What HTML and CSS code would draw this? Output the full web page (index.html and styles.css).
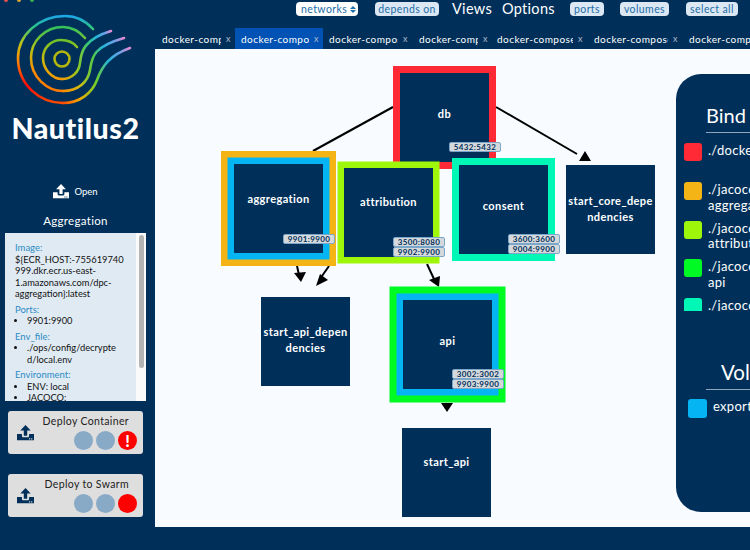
FILE: index.html
```html
<!DOCTYPE html>
<html lang="en">
<head>
<meta charset="utf-8">
<title>Nautilus2</title>
<link rel="stylesheet" href="styles.css">
</head>
<body>
<div class="app">
  <aside class="sidebar">
    <div class="dots"><i class="dot dot-r"></i><i class="dot dot-y"></i><i class="dot dot-g"></i></div>
    <svg class="logo" viewBox="0 2 155 108" width="155" height="108" fill="none" stroke-width="2.600" stroke-linecap="round">
      <defs>
        <linearGradient id="leftOuter" gradientUnits="userSpaceOnUse" x1="0" y1="16" x2="0" y2="103">
          <stop offset="0" stop-color="#1ea7e8"/>
          <stop offset=".12" stop-color="#27c28a"/>
          <stop offset=".3" stop-color="#b6c81a"/>
          <stop offset=".5" stop-color="#ff8a00"/>
          <stop offset=".8" stop-color="#ff0a0a"/>
          <stop offset="1" stop-color="#ff4a00"/>
        </linearGradient>
        <linearGradient id="leftMiddle" gradientUnits="userSpaceOnUse" x1="0" y1="27" x2="0" y2="91">
          <stop offset="0" stop-color="#32c25a"/>
          <stop offset=".35" stop-color="#b5c213"/>
          <stop offset=".7" stop-color="#ff8a00"/>
          <stop offset="1" stop-color="#ff7a00"/>
        </linearGradient>
        <linearGradient id="leftInner" gradientUnits="userSpaceOnUse" x1="0" y1="40" x2="0" y2="79">
          <stop offset="0" stop-color="#6fc22a"/>
          <stop offset=".5" stop-color="#c9b80e"/>
          <stop offset="1" stop-color="#f59a06"/>
        </linearGradient>
        <linearGradient id="rightOuter" gradientUnits="userSpaceOnUse" x1="63" y1="0" x2="130" y2="0">
          <stop offset="0" stop-color="#ff4a00"/>
          <stop offset=".25" stop-color="#f5a800"/>
          <stop offset=".5" stop-color="#6fcf2a"/>
          <stop offset=".68" stop-color="#22b6dc"/>
          <stop offset=".85" stop-color="#6f9fe6"/>
          <stop offset="1" stop-color="#e58ad2"/>
        </linearGradient>
        <linearGradient id="rightMiddle" gradientUnits="userSpaceOnUse" x1="63" y1="0" x2="124" y2="0">
          <stop offset="0" stop-color="#ff8a00"/>
          <stop offset=".3" stop-color="#c9c014"/>
          <stop offset=".5" stop-color="#4fcb4a"/>
          <stop offset=".65" stop-color="#22b6dc"/>
          <stop offset=".85" stop-color="#6f9fe6"/>
          <stop offset="1" stop-color="#e58ad2"/>
        </linearGradient>
        <linearGradient id="rightInner" gradientUnits="userSpaceOnUse" x1="62" y1="0" x2="111" y2="0">
          <stop offset="0" stop-color="#f59a06"/>
          <stop offset=".3" stop-color="#9cc71a"/>
          <stop offset=".5" stop-color="#3fc86a"/>
          <stop offset=".7" stop-color="#22b6dc"/>
          <stop offset=".88" stop-color="#6f9fe6"/>
          <stop offset="1" stop-color="#e58ad2"/>
        </linearGradient>
      </defs>
      <path stroke="url(#leftOuter)" d="M93 29C85 20 76 16 65 16C39 16 18 35 18 58C18 85 40 103 63 103"/>
      <path stroke="url(#rightOuter)" d="M63 103C80 103 92 93 97 80C102 66 110 55 130 48"/>
      <path stroke="url(#leftMiddle)" d="M85 38C79 31 71 27 63 27C45 27 31 41 31 58C31 77 47 91 63 91"/>
      <path stroke="url(#rightMiddle)" d="M63 91C78 91 88 82 90 70C92 58 92 47 124 38"/>
      <path stroke="url(#leftInner)" d="M77 47C73 42 67 40 61 40C51 40 43 48 43 58C43 69 52 79 62 79"/>
      <path stroke="url(#rightInner)" d="M62 79C72 79 79 72 80 63C81 52 84 39 111 31"/>
      <circle stroke="#b4b80e" cx="62" cy="59" r="7.500"/>
    </svg>
    <h1 class="brand">Nautilus2</h1>
    <div class="open-row">
      <svg class="upload upload-white" viewBox="0 0 18 17" width="16" height="16"><use href="#upload-shape"/></svg>
      <span>Open</span>
    </div>
    <h2 class="service-name">Aggregation</h2>
    <div class="info-box">
      <div class="info-scroll">
        <h3>Image:</h3>
        <p>${ECR_HOST:-755619740<br>999.dkr.ecr.us-east-<br>1.amazonaws.com/dpc-<br>aggregation}:latest</p>
        <h3>Ports:</h3>
        <ul><li>9901:9900</li></ul>
        <h3>Env_file:</h3>
        <ul><li>./ops/config/decrypte<br>d/local.env</li></ul>
        <h3>Environment:</h3>
        <ul><li>ENV: local</li><li>JACOCO:</li></ul>
      </div>
      <div class="scrollbar"><div class="thumb"></div></div>
    </div>
    <button class="deploy" type="button">
      <svg class="upload upload-navy" viewBox="0 0 18 17" width="17" height="17"><use href="#upload-shape"/></svg>
      <span class="deploy-body">
        <span class="deploy-title">Deploy Container</span>
        <span class="lights"><i class="light"></i><i class="light"></i><i class="light light-red">!</i></span>
      </span>
    </button>
    <button class="deploy deploy-next" type="button">
      <svg class="upload upload-navy" viewBox="0 0 18 17" width="17" height="17"><use href="#upload-shape"/></svg>
      <span class="deploy-body">
        <span class="deploy-title">Deploy to Swarm</span>
        <span class="lights"><i class="light"></i><i class="light"></i><i class="light light-red"></i></span>
      </span>
    </button>
  </aside>
  <main class="main">
    <nav class="toolbar">
      <span class="pill pill-select">networks <b class="updown"><i class="up"></i><i class="down"></i></b></span>
      <span class="pill pill-depends">depends on</span>
      <span class="tb-title tb-views">Views</span>
      <span class="tb-title tb-options">Options</span>
      <span class="pill pill-ports">ports</span>
      <span class="pill pill-volumes">volumes</span>
      <span class="pill pill-all">select all</span>
    </nav>
    <div class="tabs">
      <div class="tab t1"><span class="tab-name">docker-compose.yml</span><span class="x">x</span></div>
      <div class="tab t2 active"><span class="tab-name">docker-compose.yml</span><span class="x">x</span></div>
      <div class="tab t3"><span class="tab-name">docker-compose.yml</span><span class="x">x</span></div>
      <div class="tab t4"><span class="tab-name">docker-compose.yml</span><span class="x">x</span></div>
      <div class="tab t5"><span class="tab-name">docker-compose.dev.yml</span><span class="x">x</span></div>
      <div class="tab t6"><span class="tab-name">docker-composeE.yml</span><span class="x">x</span></div>
      <div class="tab t7"><span class="tab-name">docker-comp</span></div>
    </div>
    <section class="canvas">
      <svg class="edges" viewBox="0 0 595 478" width="595" height="478">
        <g stroke="#000" stroke-width="2">
          <line x1="238" y1="58" x2="158" y2="102"/>
          <line x1="341" y1="58" x2="422" y2="105"/>
          <line x1="142" y1="217" x2="144" y2="226"/>
          <line x1="174" y1="217" x2="167" y2="227"/>
          <line x1="272" y1="215" x2="279" y2="230"/>
        </g>
        <g fill="#000">
          <polygon points="430,102 424,112 436,112"/>
          <polygon points="139,224 151,223 146,233"/>
          <polygon points="165,225 173,231 161,237"/>
          <polygon points="274,231 285,227 284,238"/>
          <polygon points="286,354 298,354 292,363"/>
        </g>
      </svg>

      <div class="node n-db"><span class="node-label">db</span><div class="ports"><span>5432:5432</span></div></div>
      <div class="node n-aggregation"><span class="node-label">aggregation</span><div class="ports"><span>9901:9900</span></div></div>
      <div class="node n-attribution"><span class="node-label">attribution</span><div class="ports"><span>3500:8080</span><span>9902:9900</span></div></div>
      <div class="node n-consent"><span class="node-label">consent</span><div class="ports"><span>3600:3600</span><span>9004:9900</span></div></div>
      <div class="node n-core"><span class="node-label">start_core_depe<br>ndencies</span></div>
      <div class="node n-apidep"><span class="node-label">start_api_depen<br>dencies</span></div>
      <div class="node n-api"><span class="node-label">api</span><div class="ports"><span>3002:3002</span><span>9903:9900</span></div></div>
      <div class="node n-startapi"><span class="node-label">start_api</span></div>

      <aside class="legend">
        <h2 class="legend-head">Bind Mounts</h2>
        <div class="legend-list">
          <div class="legend-row row-1"><i class="swatch c-red"></i><span>./docker/db/init.sql</span></div>
          <div class="legend-row row-2"><i class="swatch c-orange"></i><span>./jacoco-reports/<br>aggregation</span></div>
          <div class="legend-row row-2"><i class="swatch c-lime"></i><span>./jacoco-reports/<br>attribution</span></div>
          <div class="legend-row row-2"><i class="swatch c-green"></i><span>./jacoco-reports/<br>api</span></div>
          <div class="legend-row row-2"><i class="swatch c-teal"></i><span>./jacoco-reports/<br>consent</span></div>
        </div>
        <h2 class="legend-head vol-head">Volumes</h2>
        <div class="legend-row vol-row"><i class="swatch c-blue"></i><span>exports</span></div>
      </aside>
    </section>
  </main>
</div>
<svg class="defs" width="0" height="0" aria-hidden="true">
  <symbol id="upload-shape" viewBox="0 0 18 17">
    <path d="M7.200 12V6.500H3.500L9 .5l5.500 6h-3.700V12z" fill="currentColor"/>
    <path fill-rule="evenodd" d="M0 10h5.200v2.200c0 .8.500 1.300 1.300 1.300h5c.8 0 1.300-.5 1.300-1.300V10H18v7H0zM12.800 14.700v1.200H14v-1.200zM15 14.700v1.200h1.200v-1.200z" fill="currentColor"/>
  </symbol>
</svg>
</body>
</html>
```
FILE: styles.css
```css
* { box-sizing: border-box; }
html, body { margin: 0; height: 100%; }
body {
  width: 750px;
  height: 550px;
  overflow: hidden;
  background: #00305a;
  color: #fff;
  font-family: "Lato", "Noto Sans", sans-serif;
}
.app { display: flex; width: 750px; height: 550px; }
.defs { position: absolute; }

.sidebar {
  position: relative;
  width: 155px;
  flex: none;
  display: flex;
  flex-direction: column;
  align-items: center;
}
.dots { display: flex; gap: 9px; height: 2px; width: 100%; padding-left: 4px; overflow: hidden; }
.dot { width: 4px; height: 4px; flex: none; border-radius: 50%; margin-top: -2px; }
.dot-r { background: #f0504a; }
.dot-y { background: #e0a92a; }
.dot-g { background: #33b54a; }
.logo { flex: none; display: block; }
.brand {
  margin: 2px 4px 0 0;
  font-size: 28.500px;
  line-height: 32px;
  font-weight: 900;
  letter-spacing: .55px;
}
.open-row {
  display: flex;
  align-items: center;
  gap: 5px;
  margin: 37px 4px 0 0;
  height: 20px;
  font-size: 9.500px;
}
.upload { display: block; flex: none; }
.upload-white { color: #fff; }
.upload-navy { color: #00305a; }
.service-name {
  margin: 13px 4px 0 0;
  font-size: 11.500px;
  line-height: 14px;
  font-weight: 400;
  letter-spacing: .3px;
}
.info-box {
  align-self: flex-start;
  margin: 5px 0 0 5px;
  width: 141px;
  height: 168px;
  display: flex;
  background: #e0eaf3;
  color: #111;
  overflow: hidden;
  font-size: 9.300px;
  line-height: 11.500px;
}
.info-scroll {
  width: 131px;
  flex: none;
  padding: 9px 0 0 10px;
  overflow: hidden;
  white-space: nowrap;
}
.info-scroll h3 {
  margin: 0;
  font-size: 9.500px;
  line-height: 11.500px;
  font-weight: 400;
  color: #2b8cc4;
}
.info-scroll p { margin: 0 0 4px; }
.info-scroll ul { margin: 0 0 4px; padding: 0 0 0 12px; }
.scrollbar { flex: 1; background: #fafafa; padding: 2px 1px; }
.thumb { width: 5px; height: 133px; margin: 0 auto; background: #b4b4b4; border-radius: 3px; }

.deploy {
  align-self: flex-start;
  display: flex;
  align-items: center;
  width: 135px;
  height: 43px;
  margin: 10px 0 0 8px;
  padding: 0 6px 0 9px;
  border: 0;
  border-radius: 3px;
  background: #dedede;
  color: #222;
  font-family: inherit;
}
.deploy-next { margin-top: 20px; }
.deploy-body { flex: 1; display: flex; flex-direction: column; align-items: flex-end; }
.deploy-title { font-size: 10.500px; line-height: 12px; letter-spacing: .35px; margin-right: 8px; white-space: nowrap; }
.lights { display: flex; gap: 3px; margin-top: 4px; }
.light { width: 19px; height: 19px; border-radius: 50%; background: #89aac7; display: block; }
.light-red { background: #fe0000; color: #fff; font: 900 16px/19px "Lato", sans-serif; text-align: center; font-style: normal; }

.main { position: relative; flex: 1; display: flex; flex-direction: column; min-width: 0; }
.toolbar { position: relative; height: 28px; flex: none; }
.pill {
  position: absolute;
  top: 2px;
  height: 14px;
  padding: 0 4px;
  border-radius: 4px;
  background: #dbe8f3;
  color: #1c6da8;
  font-size: 10.500px;
  line-height: 14px;
  letter-spacing: .4px;
  white-space: nowrap;
}
.pill-select { left: 141px; width: 62px; background: #fff; display: flex; align-items: center; gap: 3px; padding: 0 0 0 5px; }
.pill-depends { left: 220px; width: 64px; padding: 0; text-align: center; }
.pill-ports { left: 415px; width: 34px; padding: 0; text-align: center; }
.pill-volumes { left: 465px; width: 49px; padding: 0; text-align: center; }
.pill-all { left: 531px; width: 52px; padding: 0; text-align: center; }
.updown { display: inline-flex; flex-direction: column; gap: 1px; }
.up { border: 3px solid transparent; border-top: 0; border-bottom: 3.500px solid #1c6da8; width: 0; height: 0; display: block; }
.down { border: 3px solid transparent; border-bottom: 0; border-top: 3.500px solid #1c6da8; width: 0; height: 0; display: block; }
.tb-title { position: absolute; top: 0; font-size: 14.500px; line-height: 18px; letter-spacing: .3px; white-space: nowrap; }
.tb-views { left: 297px; }
.tb-options { left: 347px; }

.tabs { display: flex; height: 21px; flex: none; overflow: hidden; }
.tab {
  flex: none;
  display: flex;
  align-items: center;
  padding: 0 0 0 6px;
  font-size: 10px;
  letter-spacing: .45px;
  overflow: hidden;
}
.tab-name { display: block; overflow: hidden; white-space: nowrap; flex: none; }
.x { margin-left: 5px; font-size: 9px; color: #aebccb; }
.active { background: #0052b4; }
.t1 { width: 80px; padding-left: 7px; } .t1 .tab-name { width: 59px; }
.t2 { width: 88px; } .t2 .tab-name { width: 68px; }
.t3 { width: 90px; } .t3 .tab-name { width: 69px; }
.t4 { width: 79px; padding-left: 6px; } .t4 .tab-name { width: 59px; }
.t5 { width: 98px; padding-left: 5px; } .t5 .tab-name { width: 76px; }
.t6 { width: 95px; padding-left: 4px; } .t6 .tab-name { width: 74px; }
.t7 { width: 65px; padding-left: 4px; }

.canvas { position: relative; flex: none; height: 478px; background: #f8fbff; overflow: hidden; }
.edges { position: absolute; left: 0; top: 0; }
.node {
  position: absolute;
  width: 89px;
  height: 89px;
  background: #00305a;
  display: flex;
  align-items: flex-start;
  justify-content: center;
  text-align: center;
}
.node-label {
  margin-top: 26px;
  font-size: 11px;
  line-height: 16px;
  font-weight: 700;
  letter-spacing: .4px;
  white-space: nowrap;
}
.n-db { left: 245px; top: 24px; box-shadow: 0 0 0 7px #ff2a36; }
.n-db .node-label { margin-top: 33px; }
.n-aggregation { left: 79px; top: 115px; box-shadow: 0 0 0 6.500px #05b4f2, 0 0 0 13px #f4b416; }
.n-aggregation .node-label { margin-top: 27px; }
.n-attribution { left: 189px; top: 119px; box-shadow: 0 0 0 6.500px #9ef70a; }
.n-attribution .node-label { margin-top: 26px; }
.n-consent { left: 304px; top: 116px; box-shadow: 0 0 0 7px #00f7b5; }
.n-consent .node-label { margin-top: 33px; }
.n-core { left: 411px; top: 116px; }
.n-core .node-label { margin-top: 28px; }
.n-apidep { left: 106px; top: 248px; }
.n-apidep .node-label { margin-top: 27px; }
.n-api { left: 248px; top: 251px; box-shadow: 0 0 0 6.500px #05b4f2, 0 0 0 13.500px #00fa23; }
.n-api .node-label { margin-top: 33px; }
.n-startapi { left: 247px; top: 379px; }
.n-startapi .node-label { margin-top: 26px; }
.ports {
  position: absolute;
  right: -12px;
  bottom: 0;
  display: flex;
  flex-direction: column;
  width: 52px;
}
.ports span {
  display: block;
  height: 10px;
  border: 1px solid #7aa6c9;
  border-radius: 2px;
  background: #d6d9dc;
  color: #00305a;
  font-size: 8px;
  line-height: 8px;
  letter-spacing: .35px;
  font-weight: 700;
}
.n-db .ports { bottom: 10px; }
.n-aggregation .ports { bottom: 9px; }

.legend {
  position: absolute;
  left: 521px;
  top: 25px;
  width: 140px;
  height: 438px;
  border-radius: 25px 0 0 25px;
  background: #00305a;
  padding: 29px 0 0 8px;
  overflow: hidden;
}
.legend-head {
  margin: 0 0 0 22px;
  padding: 0 0 5px;
  font-size: 20px;
  line-height: 24px;
  font-weight: 400;
  white-space: nowrap;
  border-bottom: 1px solid #8fa7bd;
}
.legend-list { height: 168px; overflow: hidden; margin-top: 10px; }
.legend-row { display: flex; gap: 6px; font-size: 13px; line-height: 15.500px; letter-spacing: .3px; white-space: nowrap; }
.swatch { width: 18px; height: 18px; flex: none; border-radius: 3px; display: block; }
.row-1 { height: 39px; }
.row-2 { height: 38.500px; }
.c-red { background: #ff2a36; }
.c-orange { background: #f4b416; }
.c-lime { background: #9ef70a; }
.c-green { background: #00fa23; }
.c-teal { background: #00f7b5; }
.c-blue { background: #05b4f2; }
.vol-head { margin: 49px 0 0 22px; padding-left: 15px; font-size: 20.500px; }
.vol-row { margin: 9px 0 0 4px; }
.vol-row .swatch { width: 19px; height: 19px; }
```
